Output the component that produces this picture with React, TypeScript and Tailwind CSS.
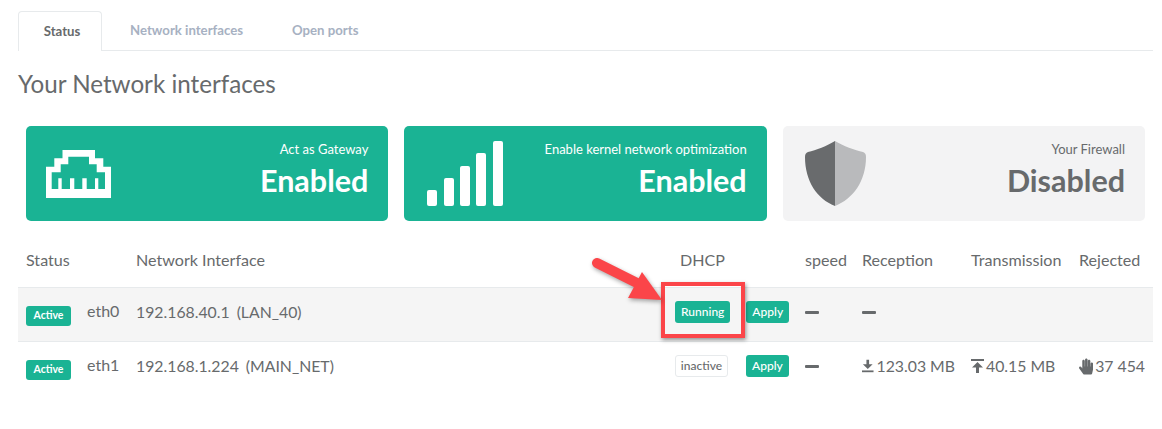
import { FaHandPaper } from 'react-icons/fa';

function Jack() {
  return (
    <svg width="65" height="48" viewBox="0 0 65 48" fill="white" fillRule="evenodd">
      <path d="M16.500 0H49V8.300H57.300V16.700H65V48H0V16.700H8.300V8.300H16.500ZM22.300 6.700V14.300H14.700V22.300H5.700V39H12.300V28.300H15.700V39H24V28.300H28.300V39H36.300V28.300H40.700V39H49V28.300H52.300V39H59V22.300H50.700V14.300H43V6.700Z" />
    </svg>
  );
}

function Bars() {
  const heights = [16, 28, 40, 53, 65];
  return (
    <div className="flex items-end gap-[6.300px] h-[65px] ml-[3px]">
      {heights.map((h) => (
        <div key={h} className="w-[10px] bg-white rounded-[2px]" style={{ height: h }} />
      ))}
    </div>
  );
}

function Shield() {
  return (
    <svg width="61" height="65" viewBox="0 0 61 65" className="ml-[2px]">
      <path d="M30 0C22 5 11 9 3 11C1 12 0 13 0 16C0 40 12 58 30 65Z" fill="#696b6d" />
      <path d="M30 0C38 5 50 9 58 11C60 12 61 13 61 16C61 40 48 58 30 65Z" fill="#b9babc" />
    </svg>
  );
}

function DownIcon() {
  return (
    <svg width="13" height="14" viewBox="0 0 13 14" fill="currentColor">
      <path d="M5 0H8V5H12L6.500 10.500L1 5H5Z" />
      <path d="M0 12H13V14H0Z" />
    </svg>
  );
}

function UpIcon() {
  return (
    <svg width="13" height="14" viewBox="0 0 13 14" fill="currentColor">
      <path d="M0 0H13V2H0Z" />
      <path d="M6.500 3L12 8.500H8V14H5V8.500H1Z" />
    </svg>
  );
}

function Card({ icon, label, value, off }: { icon: React.ReactNode; label: string; value: string; off?: boolean }) {
  return (
    <div
      className={
        'flex-1 h-[95px] rounded-[5px] flex items-center justify-between pl-5 pr-5 ' +
        (off ? 'bg-[#f3f3f4] text-[#676a6c]' : 'bg-[#1ab394] text-white')
      }
    >
      {icon}
      <div className="text-right pb-[5px]">
        <div className="text-[13px] leading-[19px] mt-[-5px]">{label}</div>
        <div className="text-[30.500px] leading-[33px] font-bold mt-[5px]">{value}</div>
      </div>
    </div>
  );
}

function Dash() {
  return <div className="w-[14px] h-[3px] bg-[#676a6c] rounded-[1px]" />;
}

function ActiveBadge() {
  return (
    <span className="inline-flex items-center justify-center shrink-0 rounded-[3px] bg-[#1ab394] text-white h-[20px] w-[45px] mt-[8px] font-bold text-[10.500px]">
      Active
    </span>
  );
}

function Badge({ children }: { children: React.ReactNode }) {
  return (
    <span className="inline-flex items-center justify-center rounded-[3px] bg-[#1ab394] text-white text-[12px] h-[22px] px-[6px] font-medium">
      {children}
    </span>
  );
}

const th = 'text-left font-normal px-2 h-[47px] align-middle pb-[6px] text-[16.100px]';
const td = 'px-2 pb-[4px] align-middle border-t border-[#e7eaec] text-[15.800px]';

export default function App() {
  return (
    <div className="relative w-[1162px] h-[429px] bg-white pl-[18px] pr-[9px] pt-[11px] text-[#676a6c] font-['Lato',sans-serif] overflow-hidden">
      <div className="flex h-[40px] border-b border-[#e7eaec] text-[13.200px] font-bold">
        <div className="w-[84px] h-[40px] bg-white border border-b-0 border-[#e7eaec] rounded-t-[4px] flex items-center justify-center pl-[4px]">
          Status
        </div>
        <div className="flex items-center pl-[28px] text-[#a7b1c2]">Network interfaces</div>
        <div className="flex items-center pl-[49px] text-[#a7b1c2]">Open ports</div>
      </div>

      <h2 className="text-[24.200px] leading-[29px] mt-[18px] font-normal">Your Network interfaces</h2>

      <div className="flex gap-[16px] mt-[28px] ml-[8px] mr-[8px]">
        <Card icon={<Jack />} label="Act as Gateway" value="Enabled" />
        <Card icon={<Bars />} label="Enable kernel network optimization" value="Enabled" />
        <Card icon={<Shield />} label="Your Firewall" value="Disabled" off />
      </div>

      <table className="w-[1135px] mt-[19px] table-fixed border-collapse">
        <colgroup>
          <col className="w-[110px]" />
          <col className="w-[544px]" />
          <col className="w-[125px]" />
          <col className="w-[57px]" />
          <col className="w-[109px]" />
          <col className="w-[108px]" />
          <col className="w-[82px]" />
        </colgroup>
        <thead>
          <tr>
            <th className={th}>Status</th>
            <th className={th}>Network Interface</th>
            <th className={th}>DHCP</th>
            <th className={th}>speed</th>
            <th className={th}>Reception</th>
            <th className={th}>Transmission</th>
            <th className={th + ' whitespace-nowrap'}>Rejected</th>
          </tr>
        </thead>
        <tbody>
          <tr className="h-[54px] bg-[#f5f5f5]">
            <td className={td}>
              <div className="flex items-center gap-[16px] whitespace-nowrap">
                <ActiveBadge />
                <span className="pb-[3px] text-[16px]">eth0</span>
              </div>
            </td>
            <td className={td}>
              192.168.40.1<span className="ml-[7px]">(LAN_40)</span>
            </td>
            <td className={td}>
              <div className="flex items-center ml-[-5px] gap-[16px]">
                <Badge>Running</Badge>
                <Badge>Apply</Badge>
              </div>
            </td>
            <td className={td}><Dash /></td>
            <td className={td}><Dash /></td>
            <td className={td} />
            <td className={td} />
          </tr>
          <tr className="h-[54px]">
            <td className={td}>
              <div className="flex items-center gap-[16px] whitespace-nowrap">
                <ActiveBadge />
                <span className="pb-[3px] text-[16px]">eth1</span>
              </div>
            </td>
            <td className={td}>
              192.168.1.224<span className="ml-[7px]">(MAIN_NET)</span>
            </td>
            <td className={td}>
              <div className="flex items-center ml-[-5px] gap-[18px]">
                <span className="inline-flex items-center justify-center h-[22px] w-[53px] rounded-[3px] bg-white border border-[#e7eaec] text-[12px] font-medium">
                  inactive
                </span>
                <Badge>Apply</Badge>
              </div>
            </td>
            <td className={td}><Dash /></td>
            <td className={td}>
              <div className="flex items-center whitespace-nowrap gap-[3px]">
                <DownIcon />
                123.03 MB
              </div>
            </td>
            <td className={td}>
              <div className="flex items-center whitespace-nowrap gap-[2px]">
                <UpIcon />
                40.15 MB
              </div>
            </td>
            <td className={td}>
              <div className="flex items-center whitespace-nowrap gap-[2px]">
                <FaHandPaper size={17} />
                37 454
              </div>
            </td>
          </tr>
        </tbody>
      </table>

      {/* screenshot annotation: red box and arrow */}
      <div className="absolute left-[661px] top-[282px] w-[84px] h-[56px] border-[4px] border-[#fb4549] shadow-[1px_2px_4px_rgba(0,0,0,0.4)]" />
      <svg className="absolute left-[585px] top-[250px]" width="90" height="60" viewBox="0 0 90 60" style={{ filter: 'drop-shadow(1px 2px 2px rgba(0,0,0,0.35))' }}>
        <path d="M12 13L52 33" stroke="#fb4549" strokeWidth="10" strokeLinecap="round" />
        <path d="M57 22L77 50L43 48Z" fill="#fb4549" />
      </svg>
    </div>
  );
}
